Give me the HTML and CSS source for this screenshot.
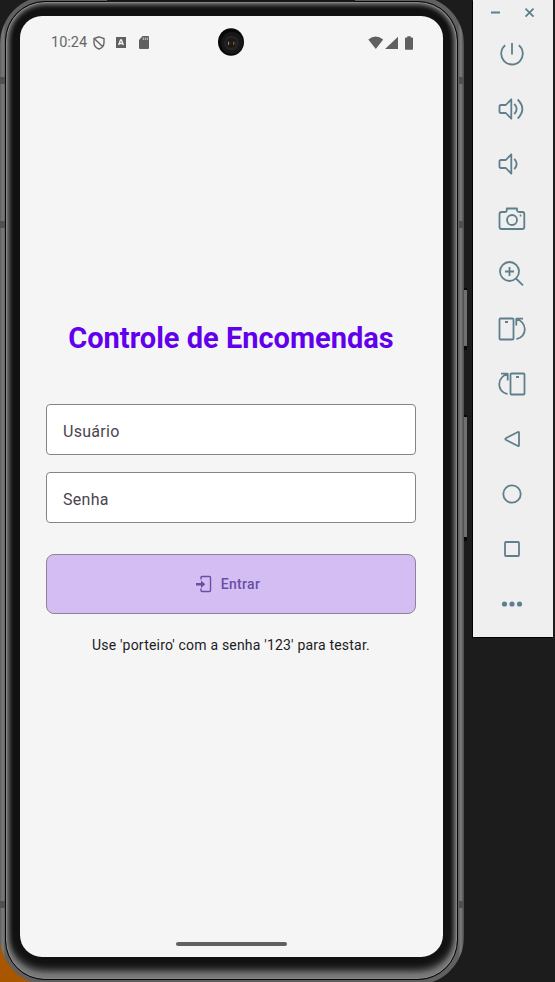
FILE: index.html
```html
<!DOCTYPE html>
<html lang="pt-BR">
<head>
<meta charset="utf-8">
<title>Controle de Encomendas</title>
<link rel="stylesheet" href="styles.css">
</head>
<body>
<div class="device">
  <i class="band band-left-top"></i><i class="band band-left-mid"></i><i class="band band-left-bottom"></i>
  <i class="band band-right-top"></i><i class="band band-right-mid"></i><i class="band band-right-bottom"></i>
  <i class="antenna"></i>
  <div class="bezel">
    <main class="screen">
      <header class="status">
        <span class="clock">10:24</span>
        <svg class="shield" width="12" height="14" viewBox="0 0 12 14"><path d="M6 .8 11 2.600V6.500C11 9.600 9 12 6 13 3 12 1 9.600 1 6.500V2.600ZM2 3.200 9.500 10.500" fill="none" stroke="#666" stroke-width="1.400"/></svg>
        <svg class="letter" width="10" height="11" viewBox="0 0 10 11"><path d="M0 0H10V11H0Z" fill="#606060"/><path d="M2.700 8 4.500 3H5.500L7.300 8M3.500 6.500H6.500" fill="none" stroke="#f5f5f5" stroke-width="1.300"/></svg>
        <svg class="sd" width="10" height="13" viewBox="0 0 10 13"><path d="M3.500 0H9Q10 0 10 1V12Q10 13 9 13H1Q0 13 0 12V4Z" fill="#606060"/><path d="M4.300 1.500V4M6.300 1.500V4M8.300 1.500V4" stroke="#c8c8c8"/></svg>
        <svg class="signals" width="46" height="14" viewBox="0 0 46 14"><path d="M.3 3.400Q7.700-2.400 15.200 3.400L7.800 12.900ZM30 .8V13H17ZM37 2.300Q37 1.500 37.800 1.500H39.300V.2H42.700V1.500H44.200Q45 1.500 45 2.300V13Q45 13.800 44.200 13.800H37.800Q37 13.800 37 13Z" fill="#606060"/></svg>
      </header>
      <div class="camera"><svg width="26" height="28" viewBox="0 0 26 28"><ellipse cx="13" cy="14" rx="13" ry="13.800" fill="#080808"/><circle cx="14" cy="15" r="11" fill="#171717"/><circle cx="13.500" cy="15" r="7.500" fill="#242424"/><circle cx="13.500" cy="15" r="5" fill="#191919"/><path d="M10.500 13.500V17" stroke="#a08a2c"/><path d="M15.800 13.500V17" stroke="#a96033"/><path d="M12 13.800V16.500M17.200 14V16.500" stroke="#3a3530"/></svg></div>
      <form class="login">
        <h1>Controle de Encomendas</h1>
        <div class="field">Usuário</div>
        <div class="field">Senha</div>
        <div class="submit"><svg width="16" height="18" viewBox="0 0 16 18"><path d="M5 4.500V2.500Q5 1.500 6 1.500H13.500Q14.500 1.500 14.500 2.500V15.500Q14.500 16.500 13.500 16.500H6Q5 16.500 5 15.500V13.500" fill="none" stroke="#6750a4" stroke-width="1.400"/><path d="M0 8H5V5.500L9.300 9.200 5 12.900V10.500H0Z" fill="#6750a4"/></svg><span>Entrar</span></div>
        <p>Use 'porteiro' com a senha '123' para testar.</p>
      </form>
      <div class="home"></div>
    </main>
  </div>
</div>
<i class="key key-power"></i><i class="key key-volume"></i>
<aside class="toolbar">
  <div class="window"><svg width="80" height="27" viewBox="0 0 80 27"><path d="M18 12.500H27M52.500 8.700 60.500 16.700M60.500 8.700 52.500 16.700"/></svg></div>
  <svg class="tool" viewBox="0 0 30 30"><path d="M8.200 6.300A10.800 10.800 0 1 0 21.800 6.300M15 4V15.500"/></svg>
  <svg class="tool" viewBox="0 0 30 30"><path d="M2.500 12 3.500 11H8.800L14.300 5.300V24.700L8.800 19H3.500L2.500 18ZM17.300 9.800Q22 15 17.300 20.200M20.700 5.500Q30 15 20.700 24.500"/></svg>
  <svg class="tool" viewBox="0 0 30 30"><path d="M2.500 12 3.500 11H8.800L14.300 5.300V24.700L8.800 19H3.500L2.500 18ZM17.300 9.800Q22 15 17.300 20.200"/></svg>
  <svg class="tool" viewBox="0 0 30 30"><path d="M4.500 8H8Q9.500 8 9.800 6.500V4.500H20V6.500Q20.500 8 22 8H25.300Q27.300 8 27.300 10V23Q27.300 25 25.300 25H4.500Q2.500 25 2.500 23V10Q2.500 8 4.500 8ZM20 16A5 5 0 1 1 10 16 5 5 0 1 1 20 16M22.700 11.500H24.300"/></svg>
  <svg class="tool" viewBox="0 0 30 30"><path d="M22 12.500A9.500 9.500 0 1 1 3 12.500 9.500 9.500 0 1 1 22 12.500M19 19.500 26 26.300M12.500 8V17M8 12.500H17"/></svg>
  <svg class="tool" viewBox="0 0 30 30"><path d="M3.500 4.500H15.500Q16.500 4.500 16.500 5.500V24.500Q16.500 25.500 15.500 25.500H3.500Q2.500 25.500 2.500 24.500V5.500Q2.500 4.500 3.500 4.500ZM8 8H11M26 4.700H19.300V11.500M19.500 5C30 8.500 31 21.500 19.500 25.200"/></svg>
  <svg class="tool" viewBox="0 0 30 30"><path d="M14.500 4.500H26.500Q27.500 4.500 27.500 5.500V24.500Q27.500 25.500 26.500 25.500H14.500Q13.500 25.500 13.500 24.500V5.500Q13.500 4.500 14.500 4.500ZM19 8H22M4 4.700H10.700V11.500M10.500 5C0 8.500-1 21.500 10.500 25.200"/></svg>
  <svg class="tool" viewBox="0 0 30 30"><path d="M21 8Q22 7.600 22 8.600V21.400Q22 22.400 21 22L8.800 15.800Q7.800 15 8.800 14.200Z"/></svg>
  <svg class="tool" viewBox="0 0 30 30"><circle cx="15" cy="15" r="8.700"/></svg>
  <svg class="tool" viewBox="0 0 30 30"><rect x="8" y="8" width="14" height="14" rx="1"/></svg>
  <svg class="tool dots" viewBox="0 0 30 30"><circle cx="7.500" cy="15" r="2.600"/><circle cx="15" cy="15" r="2.600"/><circle cx="22.500" cy="15" r="2.600"/></svg>
</aside>
</body>
</html>
```
FILE: styles.css
```css
* { box-sizing: border-box; }
body {
  margin: 0;
  width: 555px;
  height: 982px;
  display: flex;
  align-items: flex-start;
  gap: 9px;
  position: relative;
  overflow: hidden;
  font-family: Roboto, sans-serif;
  background: linear-gradient(#a85600, #a85600) 0 100% / 40px 55px no-repeat, #1c1c1c;
}
.device {
  flex: none;
  position: relative;
  width: 464px;
  height: 989px;
  margin-top: -4px;
  padding: 5px 6px 6px 5px;
  border-radius: 48px;
  background: linear-gradient(90deg, #606060 0, #7c7c7c 3px, #606060 5px, #606060 458px, #7c7c7c 461px, #484848 464px);
}
.bezel {
  height: 979px;
  padding: 14px 14px 22px 14px;
  border: 1px solid #080808;
  border-radius: 40px;
  background: #111;
  box-shadow: inset 0 0 1px 1px #888, inset 0 0 4px 3px #777, inset 0 -9px 9px -1px #888;
}
.screen {
  height: 941px;
  display: flex;
  flex-direction: column;
  align-items: center;
  width: 423px;
  border-radius: 22px;
  background: #f5f5f5;
  position: relative;
}
.status {
  width: 100%;
  height: 53px;
  padding: 0 29px 0 31px;
  display: flex;
  align-items: center;
  color: #666;
}
.clock { width: 36px; font-size: 14.500px; }
.shield { margin-left: 6px; }
.letter { margin-left: 11px; }
.sd { margin-left: 13px; }
.signals { margin-left: auto; }
.camera { position: absolute; top: 12px; left: 198px; height: 28px; }
.camera svg { display: block; }
.login { width: 370px; margin-right: 1px; padding-top: 250px; text-align: center; }
h1 {
  margin: 0 0 47px;
  height: 38px;
  font-size: 29px;
  line-height: 38px;
  font-weight: 700;
  color: #6200ee;
  white-space: nowrap;
}
.field {
  height: 51px;
  margin-bottom: 17px;
  padding: 3px 16px 0;
  border: 1px solid #86848b;
  border-radius: 4px;
  background: #fff;
  display: flex;
  align-items: center;
  font-size: 16px;
  letter-spacing: .3px;
  color: #49454f;
}
.submit {
  height: 60px;
  margin-top: 31px;
  padding-right: 6px;
  border: 1px solid #8c8496;
  border-radius: 8px;
  background: #d4bdf3;
  color: #6750a4;
  display: flex;
  align-items: center;
  justify-content: center;
  gap: 9px;
  font-size: 14px;
  letter-spacing: .3px;
  font-weight: 500;
}
p {
  margin: 21px 0 0;
  font-size: 14px;
  line-height: 20px;
  letter-spacing: .2px;
  color: #1c1b1f;
  white-space: nowrap;
}
.home { width: 111px; height: 4px; margin: auto 0 11px; border-radius: 2px; background: #606060; }
.band { position: absolute; width: 5px; height: 7px; background: #505050; }
.band-left-top, .band-right-top { top: 81px; }
.band-left-mid, .band-right-mid { top: 225px; }
.band-left-bottom, .band-right-bottom { top: 905px; }
.band-left-top, .band-left-mid, .band-left-bottom { left: 0; }
.band-right-top, .band-right-mid, .band-right-bottom { right: 0; }
.antenna { position: absolute; left: 107px; top: 4px; width: 248px; height: 2px; background: #171717; }
.key { position: absolute; left: 464px; width: 3px; background: #707070; border: solid #080808; border-width: 2px 0 4px; }
.key-power { top: 288px; height: 62px; }
.key-volume { top: 415px; height: 126px; }
.toolbar {
  flex: none;
  width: 80px;
  height: 637px;
  background: #efefef;
  box-shadow: -1px 1px #000;
  display: flex;
  flex-direction: column;
  align-items: center;
}
.toolbar svg { fill: none; stroke: #5f7f8d; stroke-width: 1.800; stroke-linejoin: round; }
.window { flex: none; height: 39px; }
.tool { flex: none; width: 30px; height: 30px; margin: 0 2px 25px 0; }
.toolbar .dots { fill: #5f7f8d; stroke: none; }
```
